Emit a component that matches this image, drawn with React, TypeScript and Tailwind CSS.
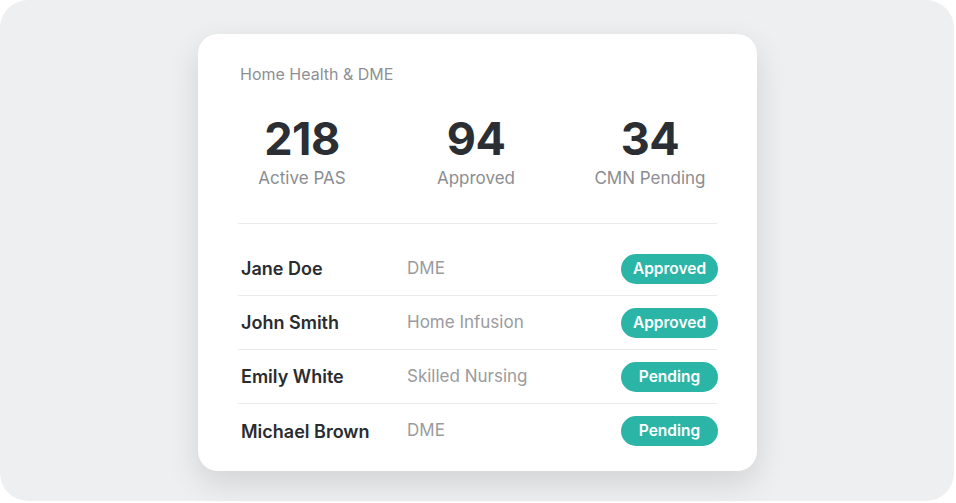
import React from "react";

type Row = {
  name: string;
  kind: string;
  status: "Approved" | "Pending";
};

const stats = [
  { value: "218", label: "Active PAS" },
  { value: "94", label: "Approved" },
  { value: "34", label: "CMN Pending" },
];

const rows: Row[] = [
  { name: "Jane Doe", kind: "DME", status: "Approved" },
  { name: "John Smith", kind: "Home Infusion", status: "Approved" },
  { name: "Emily White", kind: "Skilled Nursing", status: "Pending" },
  { name: "Michael Brown", kind: "DME", status: "Pending" },
];

export default function App() {
  return (
    <div
      className="w-[956px] h-[503px] bg-white"
      style={{ fontFamily: "Inter, 'Noto Sans', sans-serif" }}
    >
      <div className="w-[954px] h-[501px] rounded-[28px] bg-[#eeeff1] pl-[198px] pt-[34px]">
        <div className="w-[559px] h-[437px] rounded-[20px] bg-white px-10 pt-[30px] shadow-[0_12px_32px_rgba(0,0,0,0.12)]">
          <div className="h-5 pl-[2px] text-[16px] leading-5 text-[#8e9094]">
            Home Health &amp; DME
          </div>

          <div className="mt-[31px] flex gap-[46px] border-b border-[#e9eaec] pb-[33px]">
            {stats.map((s) => (
              <div key={s.label} className="w-[128px] text-center">
                <div className="text-[45px] leading-[48px] font-bold tracking-[-0.5px] text-[#2b2e33]">
                  {s.value}
                </div>
                <div className="mt-[3px] text-[17px] leading-6 text-[#8b8d91]">
                  {s.label}
                </div>
              </div>
            ))}
          </div>

          <div className="mt-[18px]">
            {rows.map((r, i) => (
              <div
                key={r.name}
                className={
                  "flex h-[54px] items-center " +
                  (i < rows.length - 1 ? "border-b border-[#e9eaec]" : "")
                }
              >
                <div className="w-[169px] pl-[3px] text-[18px] font-semibold text-[#2a2c30]">
                  {r.name}
                </div>
                <div className="flex-1 text-[17px] text-[#9a9b9e]">{r.kind}</div>
                <div className="mr-[-1px] flex h-[30px] w-[97px] items-center justify-center rounded-full bg-[#2bb5a6] text-[15.5px] font-semibold text-white">
                  {r.status}
                </div>
              </div>
            ))}
          </div>
        </div>
      </div>
    </div>
  );
}
